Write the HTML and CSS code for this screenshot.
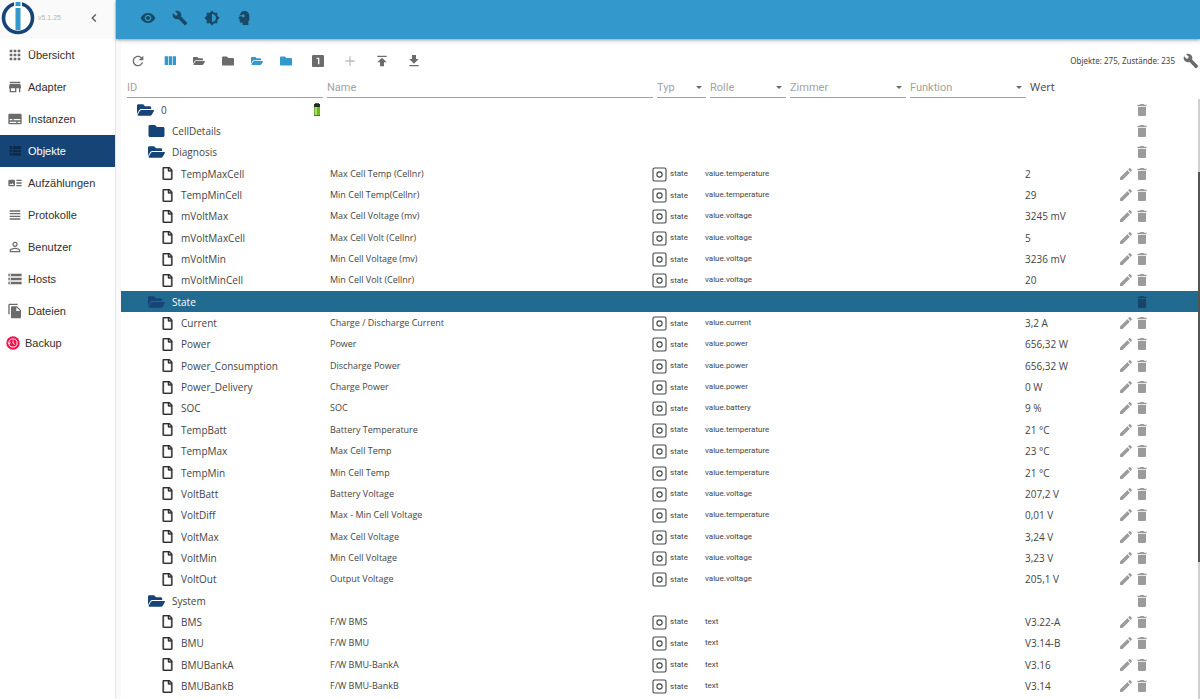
FILE: index.html
```html
<!DOCTYPE html>
<html lang="de">
<head>
  <meta charset="UTF-8">
  <meta name="viewport" content="width=device-width, initial-scale=1">
  <title>Objekte - ioBroker</title>
  <link rel="stylesheet" href="styles.css">
</head>
<body>
  <!-- Icon sprite -->
  <svg class="sprite" aria-hidden="true">
    <symbol id="i-apps" viewBox="0 0 24 24"><path d="M4 8h4V4H4v4zm6 12h4v-4h-4v4zm-6 0h4v-4H4v4zm0-6h4v-4H4v4zm6 0h4v-4h-4v4zm6-10v4h4V4h-4zm-6 4h4V4h-4v4zm6 6h4v-4h-4v4zm0 6h4v-4h-4v4z"/></symbol>
    <symbol id="i-store" viewBox="0 0 24 24"><path d="M20 4H4v2h16V4zm1 10v-2l-1-5H4l-1 5v2h1v6h10v-6h4v6h2v-6h1zm-9 4H6v-4h6v4z"/></symbol>
    <symbol id="i-subtitles" viewBox="0 0 24 24"><path d="M20 4H4c-1.1 0-2 .9-2 2v12c0 1.1.9 2 2 2h16c1.1 0 2-.9 2-2V6c0-1.1-.9-2-2-2zM4 12h4v2H4v-2zm10 6H4v-2h10v2zm6 0h-4v-2h4v2zm0-4H10v-2h10v2z"/></symbol>
    <symbol id="i-list" viewBox="0 0 24 24"><path d="M4 14h4v-4H4v4zm0 5h4v-4H4v4zM4 9h4V5H4v4zm5 5h12v-4H9v4zm0 5h12v-4H9v4zM9 5v4h12V5H9z"/></symbol>
    <symbol id="i-art" viewBox="0 0 24 24"><path d="M22 13h-8v-2h8v2zm0-6h-8v2h8V7zm-8 10h8v-2h-8v2zm-2-8v6c0 1.1-.9 2-2 2H4c-1.1 0-2-.9-2-2V9c0-1.1.9-2 2-2h6c1.1 0 2 .9 2 2zm-1.5 6l-2.25-3-1.75 2.26-1.25-1.51L3.5 15h7z"/></symbol>
    <symbol id="i-headline" viewBox="0 0 24 24"><path d="M4 15h16v-2H4v2zm0 4h16v-2H4v2zm0-8h16V9H4v2zm0-6v2h16V5H4z"/></symbol>
    <symbol id="i-person" viewBox="0 0 24 24"><path d="M12 5.9c1.16 0 2.1.94 2.1 2.1s-.94 2.1-2.1 2.1S9.9 9.16 9.9 8s.94-2.1 2.1-2.1m0 9c2.97 0 6.1 1.46 6.1 2.1v1.1H5.9V17c0-.64 3.13-2.1 6.1-2.1M12 4C9.79 4 8 5.79 8 8s1.79 4 4 4 4-1.79 4-4-1.79-4-4-4zm0 9c-2.67 0-8 1.34-8 4v3h16v-3c0-2.66-5.33-4-8-4z"/></symbol>
    <symbol id="i-storage" viewBox="0 0 24 24"><path d="M2 20h20v-4H2v4zm2-3h2v2H4v-2zM2 4v4h20V4H2zm4 3H4V5h2v2zm-4 7h20v-4H2v4zm2-3h2v2H4v-2z"/></symbol>
    <symbol id="i-copy" viewBox="0 0 24 24"><path d="M16 1H4c-1.1 0-2 .9-2 2v14h2V3h12V1zm-1 4l6 6v10c0 1.1-.9 2-2 2H7.99C6.89 23 6 22.1 6 21V7c0-1.1.89-2 1.99-2h7zm-1 7h5.5L14 6.5V12z"/></symbol>
    <symbol id="i-backup" viewBox="0 0 24 24"><circle cx="12" cy="12" r="11.5" fill="#f50f4b"/><circle cx="12" cy="12" r="7" fill="none" stroke="#fff" stroke-width="1.6"/><path d="M12 8v4.500l3 2M3.500 11l2 2.500 2.500-2" fill="none" stroke="#fff" stroke-width="1.500"/></symbol>
    <symbol id="i-left" viewBox="0 0 24 24"><path d="M15.410 7.410L14 6l-6 6 6 6 1.410-1.410L10.830 12z"/></symbol>
    <symbol id="i-eye" viewBox="0 0 24 24"><path d="M12 4.500C7 4.500 2.730 7.610 1 12c1.730 4.390 6 7.500 11 7.500s9.270-3.110 11-7.500c-1.730-4.390-6-7.500-11-7.500zM12 17c-2.760 0-5-2.240-5-5s2.240-5 5-5 5 2.240 5 5-2.240 5-5 5zm0-8c-1.660 0-3 1.340-3 3s1.340 3 3 3 3-1.340 3-3-1.340-3-3-3z"/></symbol>
    <symbol id="i-build" viewBox="0 0 24 24"><path d="M22.700 19l-9.100-9.100c.9-2.300.4-5-1.500-6.900-2-2-5-2.400-7.400-1.300L9 6 6 9 1.600 4.700C.4 7.100.9 10.100 2.900 12.100c1.900 1.900 4.600 2.400 6.900 1.500l9.100 9.100c.4.4 1 .4 1.400 0l2.300-2.300c.5-.4.5-1.100.1-1.400z"/></symbol>
    <symbol id="i-bright" viewBox="0 0 24 24"><path d="M20 15.310L23.310 12 20 8.690V4h-4.690L12 .69 8.690 4H4v4.690L.69 12 4 15.310V20h4.690L12 23.310 15.310 20H20v-4.690zM12 18V6c3.310 0 6 2.690 6 6s-2.690 6-6 6z"/></symbol>
    <symbol id="i-head" viewBox="0 0 24 24"><path fill-rule="evenodd" d="M12.500 1.500C17 1.500 20 4.500 20 9v5c0 1.500-.8 2.500-1.500 3v5.500H10V19H7.500C6 19 5.500 18 5.500 17v-3.500h-2L5.500 9c.2-4.500 3-7.500 7-7.500zM5 8v1.500h3.800a2.200 2.200 0 1 0 0-1.500z"/></symbol>
    <symbol id="i-refresh" viewBox="0 0 24 24"><path d="M17.650 6.350C16.200 4.900 14.210 4 12 4c-4.420 0-7.990 3.580-7.990 8s3.570 8 7.990 8c3.730 0 6.840-2.550 7.730-6h-2.080c-.82 2.330-3.040 4-5.650 4-3.310 0-6-2.690-6-6s2.690-6 6-6c1.660 0 3.140.69 4.220 1.780L13 11h7V4l-2.350 2.350z"/></symbol>
    <symbol id="i-columns" viewBox="0 0 24 24"><path d="M10 18h5V5h-5v13zm-6 0h5V5H4v13zM16 5v13h5V5h-5z"/></symbol>
    <symbol id="i-one" viewBox="0 0 24 24"><path d="M19 3H5c-1.100 0-2 .9-2 2v14c0 1.100.9 2 2 2h14c1.100 0 2-.9 2-2V5c0-1.100-.9-2-2-2zm-5 14h-2V9h-2V7h4v10z"/></symbol>
    <symbol id="i-add" viewBox="0 0 24 24"><path d="M19 13h-6v6h-2v-6H5v-2h6V5h2v6h6v2z"/></symbol>
    <symbol id="i-publish" viewBox="0 0 24 24"><path d="M5 4v2h14V4H5zm0 10h4v6h6v-6h4l-7-7-7 7z"/></symbol>
    <symbol id="i-download" viewBox="0 0 24 24"><path d="M5 20h14v-2H5v2zM19 9h-4V3H9v6H5l7 7 7-7z"/></symbol>
    <symbol id="i-edit" viewBox="0 0 24 24"><path d="M3 17.250V21h3.750L17.810 9.940l-3.750-3.750L3 17.250zM20.710 7.040c.39-.39.39-1.020 0-1.410l-2.340-2.340c-.39-.39-1.020-.39-1.410 0l-1.830 1.830 3.750 3.750 1.830-1.830z"/></symbol>
    <symbol id="i-delete" viewBox="0 0 24 24"><path d="M6 19c0 1.100.9 2 2 2h8c1.100 0 2-.9 2-2V7H6v12zM19 4h-3.500l-1-1h-5l-1 1H5v2h14V4z"/></symbol>
    <symbol id="i-drop" viewBox="0 0 8 4"><path d="M0 0h8L4 4z"/></symbol>
    <symbol id="i-open" viewBox="0 0 576 512"><path d="M572.694 292.093L500.270 416.248A63.997 63.997 0 0 1 444.989 448H45.025c-18.523 0-30.064-20.093-20.731-36.093l72.424-124.155A64 64 0 0 1 152 256h399.964c18.523 0 30.064 20.093 20.730 36.093zM152 224h328v-48c0-26.510-21.490-48-48-48H272l-64-64H48C21.490 64 0 85.490 0 112v278.046l69.077-118.418C86.214 242.250 117.989 224 152 224z"/></symbol>
    <symbol id="i-closed" viewBox="0 0 512 512"><path d="M464 128H272l-64-64H48C21.490 64 0 85.490 0 112v288c0 26.510 21.490 48 48 48h416c26.510 0 48-21.490 48-48V176c0-26.510-21.490-48-48-48z"/></symbol>
    <symbol id="i-file" viewBox="0 0 384 512"><path stroke="currentColor" stroke-width="14" d="M369.900 97.900L286 14C277 5 264.800 0 252.100 0H48C21.500 0 0 21.500 0 48v416c0 26.500 21.500 48 48 48h288c26.500 0 48-21.500 48-48V131.900c0-12.700-5.100-25-14.100-34zM332.100 128H256V51.900l76.100 76.100zM48 464V48h160v104c0 13.300 10.700 24 24 24h104v288H48z"/></symbol>
    <symbol id="i-state" viewBox="0 0 15 15"><rect x="1" y="1" width="13" height="13" rx="1.500" fill="none" stroke="currentColor" stroke-width="1.100"/><circle cx="7.500" cy="7.500" r="2.600" fill="none" stroke="currentColor" stroke-width="1.100"/></symbol>
    <symbol id="i-battery" viewBox="0 0 8 14"><rect x="1" y="1" width="6" height="4" fill="#243018"/><rect x="2" y="0" width="4" height="1" fill="#555"/><path d="M1 4h6v9H1z" fill="#6cb52d"/><path d="M2 4h2v9H2z" fill="#a5e05a"/><path d="M1 12h6v1H1z" fill="#3f7a1c"/></symbol>
  </svg>

  <aside class="sidebar">
    <div class="brand">
      <svg class="logo" viewBox="0 0 34 34" role="img" aria-label="ioBroker">
        <circle cx="17" cy="17" r="14.500" fill="#fff" stroke="#164477" stroke-width="3.600"/>
        <path d="M13 0h8v6h-8z" fill="#fafafa"/>
        <path d="M14.500 1h5v4h-5zM14.500 7h5v22h-5z" fill="#3399cc"/>
      </svg>
      <span class="version">v5.1.25</span>
      <button class="icon-button collapse" aria-label="Menü schließen"><svg class="icon"><use href="#i-left"/></svg></button>
    </div>
    <nav class="menu">
      <a class="menu-item" href="#"><svg class="icon"><use href="#i-apps"/></svg>Übersicht</a>
      <a class="menu-item" href="#"><svg class="icon"><use href="#i-store"/></svg>Adapter</a>
      <a class="menu-item" href="#"><svg class="icon"><use href="#i-subtitles"/></svg>Instanzen</a>
      <a class="menu-item active" href="#"><svg class="icon"><use href="#i-list"/></svg>Objekte</a>
      <a class="menu-item" href="#"><svg class="icon"><use href="#i-art"/></svg>Aufzählungen</a>
      <a class="menu-item" href="#"><svg class="icon"><use href="#i-headline"/></svg>Protokolle</a>
      <a class="menu-item" href="#"><svg class="icon"><use href="#i-person"/></svg>Benutzer</a>
      <a class="menu-item" href="#"><svg class="icon"><use href="#i-storage"/></svg>Hosts</a>
      <a class="menu-item" href="#"><svg class="icon"><use href="#i-copy"/></svg>Dateien</a>
      <a class="menu-item backup" href="#"><svg class="icon"><use href="#i-backup"/></svg>Backup</a>
    </nav>
  </aside>

  <div class="main">
    <header class="appbar">
      <button class="icon-button" aria-label="Sichtbarkeit"><svg class="icon"><use href="#i-eye"/></svg></button>
      <button class="icon-button" aria-label="Systemeinstellungen"><svg class="icon"><use href="#i-build"/></svg></button>
      <button class="icon-button" aria-label="Farbthema"><svg class="icon"><use href="#i-bright"/></svg></button>
      <button class="icon-button" aria-label="Expertenmodus"><svg class="icon"><use href="#i-head"/></svg></button>
    </header>

    <main class="panel">
      <div class="toolbar">
        <button class="icon-button" aria-label="Aktualisieren"><svg class="icon"><use href="#i-refresh"/></svg></button>
        <div class="tool-group">
          <button class="icon-button blue" aria-label="Spalten"><svg class="icon"><use href="#i-columns"/></svg></button>
          <button class="icon-button" aria-label="Alle öffnen"><svg class="icon small"><use href="#i-open"/></svg></button>
          <button class="icon-button" aria-label="Alle schließen"><svg class="icon small"><use href="#i-closed"/></svg></button>
          <button class="icon-button blue" aria-label="Eine Ebene öffnen"><svg class="icon small"><use href="#i-open"/></svg></button>
          <button class="icon-button blue" aria-label="Eine Ebene schließen"><svg class="icon small"><use href="#i-closed"/></svg></button>
        </div>
        <button class="icon-button" aria-label="Zustände"><svg class="icon"><use href="#i-one"/></svg></button>
        <button class="icon-button" aria-label="Hinzufügen" disabled><svg class="icon"><use href="#i-add"/></svg></button>
        <button class="icon-button" aria-label="Hochladen"><svg class="icon"><use href="#i-publish"/></svg></button>
        <button class="icon-button" aria-label="Herunterladen"><svg class="icon"><use href="#i-download"/></svg></button>
        <span class="counts">Objekte: 275, Zustände: 235</span>
        <button class="icon-button config" aria-label="Konfigurieren"><svg class="icon"><use href="#i-build"/></svg></button>
      </div>

      <div class="filters">
        <input class="field" type="text" placeholder="ID" aria-label="ID">
        <input class="field" type="text" placeholder="Name" aria-label="Name">
        <div class="field"><select aria-label="Typ"><option>Typ</option></select><svg class="drop"><use href="#i-drop"/></svg></div>
        <div class="field"><select aria-label="Rolle"><option>Rolle</option></select><svg class="drop"><use href="#i-drop"/></svg></div>
        <div class="field"><select aria-label="Zimmer"><option>Zimmer</option></select><svg class="drop"><use href="#i-drop"/></svg></div>
        <div class="field"><select aria-label="Funktion"><option>Funktion</option></select><svg class="drop"><use href="#i-drop"/></svg></div>
        <span class="value-title">Wert</span>
      </div>

      <div class="list">
        <div class="table-wrap">
          <table class="objects">
            <colgroup>
              <col class="col-id"><col><col class="col-type"><col class="col-role"><col class="col-room"><col class="col-room"><col class="col-value"><col class="col-actions">
            </colgroup>
            <tbody id="objectRows"></tbody>
          </table>
        </div>
        <div class="scrollbar"><div class="thumb"></div></div>
      </div>
    </main>
  </div>

  <script>
    // folders: [level, id, icon], states: [id, name, role, value]
    const rows = [
      [0, '0', 'open'],
      [1, 'CellDetails', 'closed'],
      [1, 'Diagnosis', 'open'],
      ['TempMaxCell', 'Max Cell Temp (Cellnr)', 'value.temperature', '2'],
      ['TempMinCell', 'Min Cell Temp(Cellnr)', 'value.temperature', '29'],
      ['mVoltMax', 'Max Cell Voltage (mv)', 'value.voltage', '3245 mV'],
      ['mVoltMaxCell', 'Max Cell Volt (Cellnr)', 'value.voltage', '5'],
      ['mVoltMin', 'Min Cell Voltage (mv)', 'value.voltage', '3236 mV'],
      ['mVoltMinCell', 'Min Cell Volt (Cellnr)', 'value.voltage', '20'],
      [1, 'State', 'open'],
      ['Current', 'Charge / Discharge Current', 'value.current', '3,2 A'],
      ['Power', 'Power', 'value.power', '656,32 W'],
      ['Power_Consumption', 'Discharge Power', 'value.power', '656,32 W'],
      ['Power_Delivery', 'Charge Power', 'value.power', '0 W'],
      ['SOC', 'SOC', 'value.battery', '9 %'],
      ['TempBatt', 'Battery Temperature', 'value.temperature', '21 °C'],
      ['TempMax', 'Max Cell Temp', 'value.temperature', '23 °C'],
      ['TempMin', 'Min Cell Temp', 'value.temperature', '21 °C'],
      ['VoltBatt', 'Battery Voltage', 'value.voltage', '207,2 V'],
      ['VoltDiff', 'Max - Min Cell Voltage', 'value.temperature', '0,01 V'],
      ['VoltMax', 'Max Cell Voltage', 'value.voltage', '3,24 V'],
      ['VoltMin', 'Min Cell Voltage', 'value.voltage', '3,23 V'],
      ['VoltOut', 'Output Voltage', 'value.voltage', '205,1 V'],
      [1, 'System', 'open'],
      ['BMS', 'F/W BMS', 'text', 'V3.22-A'],
      ['BMU', 'F/W BMU', 'text', 'V3.14-B'],
      ['BMUBankA', 'F/W BMU-BankA', 'text', 'V3.16'],
      ['BMUBankB', 'F/W BMU-BankB', 'text', 'V3.14']
    ];

    function icon(name, cls) {
      return `<svg class="${cls}"><use href="#i-${name}"/></svg>`;
    }

    function rowButton(name, label) {
      return `<button class="row-button" aria-label="${label}">${icon(name, 'icon')}</button>`;
    }

    function folderRow([level, id, state]) {
      return `
        <tr class="${id === 'State' ? 'selected' : ''}">
          <td><div class="id level-${level}">${icon(state, 'folder')}<span>${id}</span>${level === 0 ? icon('battery', 'battery') : ''}</div></td>
          <td></td><td></td><td></td><td></td><td></td><td></td>
          <td><div class="actions">${rowButton('delete', 'Löschen')}</div></td>
        </tr>`;
    }

    function stateRow([id, name, role, value]) {
      return `
        <tr>
          <td><div class="id level-2">${icon('file', 'file')}<span>${id}</span></div></td>
          <td class="name">${name}</td>
          <td><div class="type">${icon('state', 'state')}<span>state</span></div></td>
          <td class="role">${role}</td>
          <td></td><td></td>
          <td class="value">${value}</td>
          <td><div class="actions">${rowButton('edit', 'Bearbeiten')}${rowButton('delete', 'Löschen')}</div></td>
        </tr>`;
    }

    document.getElementById('objectRows').innerHTML = rows
      .map(row => typeof row[0] === 'number' ? folderRow(row) : stateRow(row))
      .join('');
  </script>
</body>
</html>
```
FILE: styles.css
```css
* {
  box-sizing: border-box;
}

body {
  margin: 0;
  height: 100vh;
  display: flex;
  overflow: hidden;
  background-color: #fafafa;
  color: #444;
  font-family: "Open Sans", "Segoe UI", sans-serif;
  font-size: 11px;
}

button,
input,
select {
  font: inherit;
  color: inherit;
  background: none;
  border: none;
  border-radius: 0;
  padding: 0;
  margin: 0;
}

button {
  cursor: pointer;
}

.sprite {
  display: none;
}

.icon {
  display: block;
  width: 16px;
  height: 16px;
  fill: currentColor;
  flex-shrink: 0;
}

.icon.small {
  width: 12px;
  height: 12px;
}

.icon-button {
  display: flex;
  align-items: center;
  justify-content: center;
  width: 32px;
  height: 32px;
}

/* Sidebar */
.sidebar {
  width: 116px;
  flex-shrink: 0;
  background-color: white;
  border-right: 1px solid #e6e6e6;
  font-family: "Liberation Sans", Arial, sans-serif;
}

.brand {
  display: flex;
  align-items: center;
  height: 39px;
  padding: 0 5px 4px 1px;
  background-color: #fafafa;
}

.logo {
  width: 34px;
  height: 34px;
}

.version {
  margin-left: 3px;
  font-size: 7px;
  color: #b5b5b5;
}

.collapse {
  margin-left: auto;
  color: #555;
}

.menu-item {
  display: flex;
  align-items: center;
  gap: 5px;
  height: 32px;
  padding-left: 7px;
  color: #303030;
  text-decoration: none;
}

.menu-item .icon {
  color: #6b6b6b;
}

.menu-item.active {
  background-color: #164477;
  color: white;
}

.menu-item.active .icon {
  color: #0d2a4b;
}

.backup {
  padding-left: 6px;
}

.backup .icon {
  width: 14px;
  height: 14px;
}

/* Top bar */
.main {
  display: flex;
  flex: 1;
  flex-direction: column;
  min-width: 0;
}

.appbar {
  display: flex;
  align-items: center;
  height: 39px;
  flex-shrink: 0;
  padding: 0 16px 4px;
  background-color: #3399cc;
  color: #174a66;
  box-shadow: 0 1px 3px rgba(0, 0, 0, 0.4);
}

.panel {
  display: flex;
  flex: 1;
  flex-direction: column;
  min-height: 0;
  margin: 5px 0 0 5px;
  background-color: white;
}

.toolbar {
  display: flex;
  align-items: center;
  height: 33px;
  flex-shrink: 0;
  padding-left: 1px;
  color: #6b6b6b;
}

.tool-group {
  display: flex;
  padding: 0 2px 0 1px;
}

.tool-group .icon-button {
  width: 29px;
}

.blue {
  color: #3399cc;
}

.icon-button:disabled {
  color: #bdbdbd;
}

.counts {
  margin-left: auto;
  font-family: "Noto Sans", sans-serif;
  font-size: 8px;
  color: #444;
}

.config {
  width: 25px;
  padding-left: 6px;
}

/* Filter row */
.filters {
  display: grid;
  grid-template-columns: 196px 1fr 49px 76px 116px 116px 168px;
  gap: 4px;
  height: 21px;
  flex-shrink: 0;
  padding: 0 2px 0 6px;
  font-family: Roboto, sans-serif;
}

.field {
  display: flex;
  align-items: center;
  min-width: 0;
  height: 21px;
  border-bottom: 1px solid #a0a0a0;
  color: #a2a2a2;
}

.field::placeholder {
  color: #a2a2a2;
}

.field select {
  flex: 1;
  min-width: 0;
  appearance: none;
}

.drop {
  width: 6px;
  height: 3px;
  margin-right: 4px;
  fill: #6b6b6b;
}

.value-title {
  line-height: 20px;
  font-family: "Open Sans", sans-serif;
}

/* Object tree */
.list {
  display: flex;
  flex: 1;
  min-height: 0;
  padding-top: 1px;
}

.table-wrap {
  flex: 1;
  min-width: 0;
  padding-bottom: 2px;
  overflow: hidden;
}

.objects {
  width: 100%;
  height: 100%;
  table-layout: fixed;
  border-collapse: collapse;
  font-size: 10px;
}

.objects tr {
  height: 20px;
}

.objects td {
  padding: 0;
  line-height: 16px;
  white-space: nowrap;
}

.col-id {
  width: 209px;
}

.col-type {
  width: 53px;
}

.col-role {
  width: 80px;
}

.col-room {
  width: 120px;
}

.col-value {
  width: 93px;
}

.col-actions {
  width: 80px;
}

.id {
  display: flex;
  align-items: center;
}

.level-0 {
  padding-left: 16px;
}

.level-1 {
  padding-left: 27px;
}

.level-2 {
  padding-left: 41px;
}

.folder {
  width: 17px;
  height: 16px;
  margin-right: 7px;
  fill: #164477;
}

.file {
  width: 11px;
  height: 13px;
  margin-right: 8px;
  color: #303030;
  fill: currentColor;
  overflow: visible;
}

.battery {
  width: 8px;
  height: 14px;
  margin-left: auto;
  margin-right: 9px;
}

.objects .name {
  font-size: 9px;
}

.type {
  display: flex;
  align-items: center;
  gap: 3px;
  padding-top: 1px;
  font-family: Roboto, sans-serif;
  font-size: 8px;
}

.state {
  width: 15px;
  height: 15px;
}

.objects .role {
  font-family: Roboto, sans-serif;
  font-size: 8px;
}

.actions {
  display: flex;
  justify-content: flex-end;
  padding-right: 48px;
}

.row-button {
  width: 16px;
  height: 16px;
  color: #9b9b9b;
}

.selected {
  background-color: #226b90;
  color: white;
}

.selected .row-button {
  color: #174468;
}

.scrollbar {
  width: 2px;
  padding-top: 73px;
  background-color: #d0d0d0;
}

.thumb {
  height: 74%;
  background-color: #555;
}
```
